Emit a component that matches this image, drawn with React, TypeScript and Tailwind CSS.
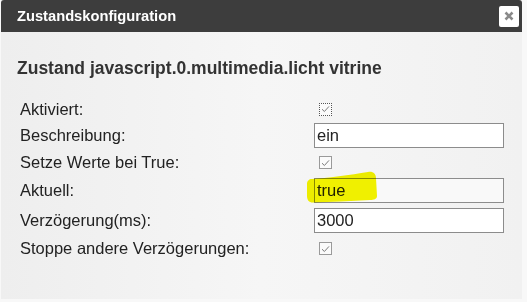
import React from 'react';

const Check: React.FC<{ focused?: boolean }> = ({ focused }) => (
  <span
    className={
      'flex w-[13px] h-[13px] items-center justify-center bg-[#fbfbfb] ' +
      (focused ? 'border border-dotted border-[#555]' : 'border border-[#9a9a9a]')
    }
  >
    <svg width="9" height="8" viewBox="0 0 9 8" fill="none">
      <path d="M1 4.2 L3.4 6.5 L8 1.4" stroke="#7a7a7a" strokeWidth="1" />
    </svg>
  </span>
);

const Field: React.FC<{ value: string; readOnly?: boolean }> = ({ value, readOnly }) => (
  <div
    className={
      'w-[190px] h-[25px] border border-[#8c8c8c] px-[2px] flex items-center text-[16.5px] text-[#222] ' +
      (readOnly ? 'bg-[#f9f9f9]' : 'bg-white')
    }
  >
    {value}
  </div>
);

const Row: React.FC<{ label: string; h: string; children: React.ReactNode }> = ({ label, h, children }) => (
  <div className={'flex items-center ' + h}>
    <div className="w-[294px] text-[16.5px] text-[#222]">{label}</div>
    <div className="flex items-center">{children}</div>
  </div>
);

export default function App() {
  return (
    <div className="w-[527px] h-[302px] bg-[#f8f8f8] overflow-hidden" style={{ fontFamily: '"Liberation Sans", Arial, sans-serif' }}>
      <div className="ml-[1px] w-[521px] h-[299px] bg-gradient-to-r from-[#eeeeee] via-[#f6f6f6] to-[#f1f1f1] flex flex-col">
        {/* title bar */}
        <div className="h-[32px] bg-[#3d3d3d] rounded-t-[3px] flex items-center justify-between pl-[16px] pr-[3px]">
          <span className="text-white font-bold text-[14.7px] leading-none">Zustandskonfiguration</span>
          <span className="w-[20px] h-[21px] bg-white rounded-[2px] flex items-center justify-center">
            <svg width="10" height="10" viewBox="0 0 10 10">
              <path d="M1.5 1.5 L8.5 8.5 M8.5 1.5 L1.5 8.5" stroke="#8a8a8a" strokeWidth="2.6" />
            </svg>
          </span>
        </div>

        <h2 className="mt-[25px] ml-[16px] text-[17.5px] leading-[22px] font-bold text-[#333]">
          Zustand javascript.0.multimedia.licht vitrine
        </h2>

        <div className="mt-[17px] pl-[19px] flex flex-col">
          <Row label="Aktiviert:" h="h-[26px]">
            <span className="ml-[5px]"><Check focused /></span>
          </Row>
          <Row label="Beschreibung:" h="h-[27px]">
            <Field value="ein" />
          </Row>
          <Row label="Setze Werte bei True:" h="h-[27px]">
            <span className="ml-[5px]"><Check /></span>
          </Row>
          <Row label="Aktuell:" h="h-[29px]">
            <div className="relative">
              <Field value="true" readOnly />
              {/* highlighter stroke */}
              <svg className="absolute left-[-8px] top-[-7px] mix-blend-multiply pointer-events-none" width="80" height="34" viewBox="0 0 80 34">
                <path
                  d="M6 8 C20 7 45 4 62 1 C67 0 70 3 70 7 L71 25 C71 28 68 29 64 29 C45 30 25 31 8 31.5 C3 32 1 29 1 25 L1 13 C1 10 3 8 6 8 Z"
                  fill="#f6f600"
                />
              </svg>
            </div>
          </Row>
          <Row label="Verzögerung(ms):" h="h-[30px]">
            <Field value="3000" />
          </Row>
          <Row label="Stoppe andere Verzögerungen:" h="h-[27px]">
            <span className="ml-[5px]"><Check /></span>
          </Row>
        </div>
      </div>
    </div>
  );
}
